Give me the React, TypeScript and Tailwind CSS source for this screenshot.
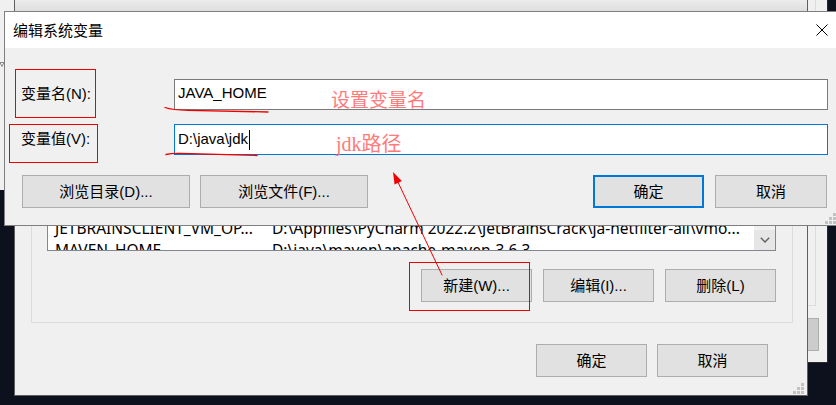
import React from "react";

const ui = "font-['Liberation_Sans','Noto_Sans_CJK_SC',sans-serif]";

function WinButton({
  label,
  className = "",
  focused = false,
}: {
  label: string;
  className?: string;
  focused?: boolean;
}) {
  return (
    <div
      className={`flex shrink-0 items-center justify-center bg-[#e1e1e1] text-[15px] leading-none text-black ${
        focused ? "border-2 border-[#0078d7]" : "border border-[#adadad]"
      } ${className}`}
    >
      {label}
    </div>
  );
}

function Grip() {
  return (
    <svg width="11" height="11" viewBox="0 0 11 11" className="block">
      <g fill="#c2c2c2">
        <rect x="8" y="0" width="3" height="3" />
        <rect x="4" y="4" width="3" height="3" />
        <rect x="8" y="4" width="3" height="3" />
        <rect x="0" y="8" width="3" height="3" />
        <rect x="4" y="8" width="3" height="3" />
        <rect x="8" y="8" width="3" height="3" />
      </g>
    </svg>
  );
}

const rows = [
  ["JETBRAINSCLIENT_VM_OP...", "D:\\Appfiles\\PyCharm 2022.2\\JetBrainsCrack\\ja-netfilter-all\\vmo..."],
  ["MAVEN_HOME", "D:\\java\\maven\\apache-maven-3.6.3"],
];

export default function App() {
  return (
    <div className={`relative h-[405px] w-[836px] overflow-hidden bg-[#0c111d] ${ui}`}>
      {/* window far left */}
      <div className="absolute left-0 top-0 h-[190px] w-[14px] bg-[#f0f0f0]">
        <svg width="4" height="5" className="mt-[62px] block">
          <path d="M0 0.5H4L2 4.5Z" fill="none" stroke="#8a8a8a" strokeWidth="1" />
        </svg>
      </div>

      {/* window behind, right side */}
      <div className="absolute left-[500px] top-0 flex h-[363px] w-[328px] flex-col border-b border-r border-[#2a2a2a] bg-[#f0f0f0]">
        <div className="mr-[11px] h-[306px] shrink-0 border-b border-r border-[#dcdcdc]" />
        <div className="mr-[8px] mt-[12px] h-[33px] w-[80px] self-end border border-[#adadad] bg-[#cccccc]" />
      </div>

      {/* 环境变量 window */}
      <div className="absolute left-[14px] top-0 flex h-[396px] w-[794px] flex-col border-x border-b border-[#5f5f5f] bg-[#f0f0f0]">
        <div className="h-[11px] shrink-0 bg-gradient-to-b from-[#ececec] to-[#dedede]" />
        <div className="ml-[16px] mr-[14px] mt-[9px] flex h-[303px] shrink-0 flex-col border border-[#dcdcdc]">
          <div className="ml-[15px] mt-[39px] flex h-[191px] w-[729px] border border-[#828790] bg-white">
            <div className="flex flex-1 flex-col justify-end overflow-hidden font-['Noto_Sans',sans-serif]">
              {rows.map(([name, value], i) => (
                <div
                  key={name}
                  className={`flex h-[22px] shrink-0 items-center whitespace-nowrap text-[15.5px] leading-[22px] text-black ${
                    i === rows.length - 1 ? "mb-[-11px]" : ""
                  }`}
                >
                  <span className="w-[224px] shrink-0 pl-[7px]">{name}</span>
                  <span>{value}</span>
                </div>
              ))}
            </div>
            <div className="flex w-[21px] flex-col justify-end bg-[#f0f0f0]">
              <div className="flex h-[20px] items-center justify-center bg-[#e6e6e6]">
                <svg width="10" height="6" viewBox="0 0 10 6">
                  <path d="M0.8 0.8L5 5L9.2 0.8" fill="none" stroke="#606060" strokeWidth="1.4" />
                </svg>
              </div>
            </div>
          </div>
          <div className="ml-[15px] mt-[18px] flex w-[729px] justify-end gap-[11px]">
            <WinButton label="新建(W)..." className="h-[33px] w-[111px]" />
            <WinButton label="编辑(I)..." className="h-[33px] w-[111px]" />
            <WinButton label="删除(L)" className="h-[33px] w-[111px]" />
          </div>
        </div>
        <div className="mr-[39px] mt-[21px] flex justify-end gap-[10px]">
          <WinButton label="确定" className="h-[33px] w-[111px]" />
          <WinButton label="取消" className="h-[33px] w-[111px]" />
        </div>
        <div className="mt-auto flex justify-end pb-[1px] pr-[3px]">
          <Grip />
        </div>
      </div>

      {/* 编辑系统变量 dialog */}
      <div className="absolute left-[4px] top-[11px] flex h-[215px] w-[836px] flex-col border border-[#7f7f7f] bg-[#f0f0f0]">
        <div className="flex h-[36px] shrink-0 items-center justify-between bg-white pl-[8px] pr-[11px]">
          <span className="text-[15px] leading-none text-black">编辑系统变量</span>
          <svg width="12" height="12" viewBox="0 0 12 12">
            <path d="M0.5 0.5L11.5 11.5M11.5 0.5L0.5 11.5" stroke="#000" strokeWidth="1" />
          </svg>
        </div>
        <div className="flex flex-1 flex-col pt-[31px]">
          <div className="flex h-[31px] items-center">
            <div className="w-[169px] shrink-0 pl-[16px] text-[15px] text-black">变量名(N):</div>
            <div className="mr-[11px] flex h-full flex-1 items-center border border-[#7a7a7a] bg-white pb-[2px] pl-[3px] text-[15px] text-black">
              JAVA_HOME
            </div>
          </div>
          <div className="mt-[14px] flex h-[31px] items-center">
            <div className="w-[169px] shrink-0 pl-[16px] text-[15px] text-black">变量值(V):</div>
            <div className="mr-[11px] flex h-full flex-1 items-center border border-[#0078d7] bg-white pl-[3px] text-[15px] text-black">
              {"D:\\java\\jdk"}
              <span className="ml-[1px] inline-block h-[20px] w-px bg-black" />
            </div>
          </div>
          <div className="mt-[20px] flex h-[33px] items-stretch pl-[17px] pr-[12px]">
            <WinButton label="浏览目录(D)..." className="w-[168px]" />
            <WinButton label="浏览文件(F)..." className="ml-[10px] w-[168px]" />
            <WinButton label="确定" focused className="ml-auto w-[111px]" />
            <WinButton label="取消" className="ml-[11px] w-[112px]" />
          </div>
        </div>
        <div className="absolute bottom-[1px] right-[3px]">
          <Grip />
        </div>
      </div>

      {/* red annotations */}
      <div className="pointer-events-none absolute left-[15px] top-[69px] h-[49px] w-[81px] border border-[#ee0000]" />
      <div className="pointer-events-none absolute left-[9px] top-[124px] h-[39px] w-[89px] border border-[#ee0000]" />
      <div className="pointer-events-none absolute left-[409px] top-[262px] h-[49px] w-[121px] border border-[#ee0000]" />
      <span className="absolute left-[331px] top-[89px] whitespace-nowrap font-['Noto_Sans_CJK_SC',sans-serif] text-[19px] leading-none text-[#ff7a7a]">
        设置变量名
      </span>
      <span className="absolute left-[336px] top-[134px] whitespace-nowrap font-['Liberation_Serif','Noto_Sans_CJK_SC',serif] text-[20px] leading-none text-[#ff7a7a]">
        jdk路径
      </span>
      <svg className="pointer-events-none absolute left-0 top-0" width="836" height="405">
        <g fill="none" stroke="#f00000" strokeLinecap="round">
          <path d="M165 107.5 Q172 110 188 110.3 L268 112" strokeWidth="1.3" />
          <path d="M166 154.5 Q172 153 181 153.4 L257 155.5" strokeWidth="1.3" />
          <path d="M442 275 L396 178" strokeWidth="1" />
        </g>
        <polygon points="393,172 401.8,181.1 394.6,184.5" fill="#f00000" />
      </svg>
    </div>
  );
}
